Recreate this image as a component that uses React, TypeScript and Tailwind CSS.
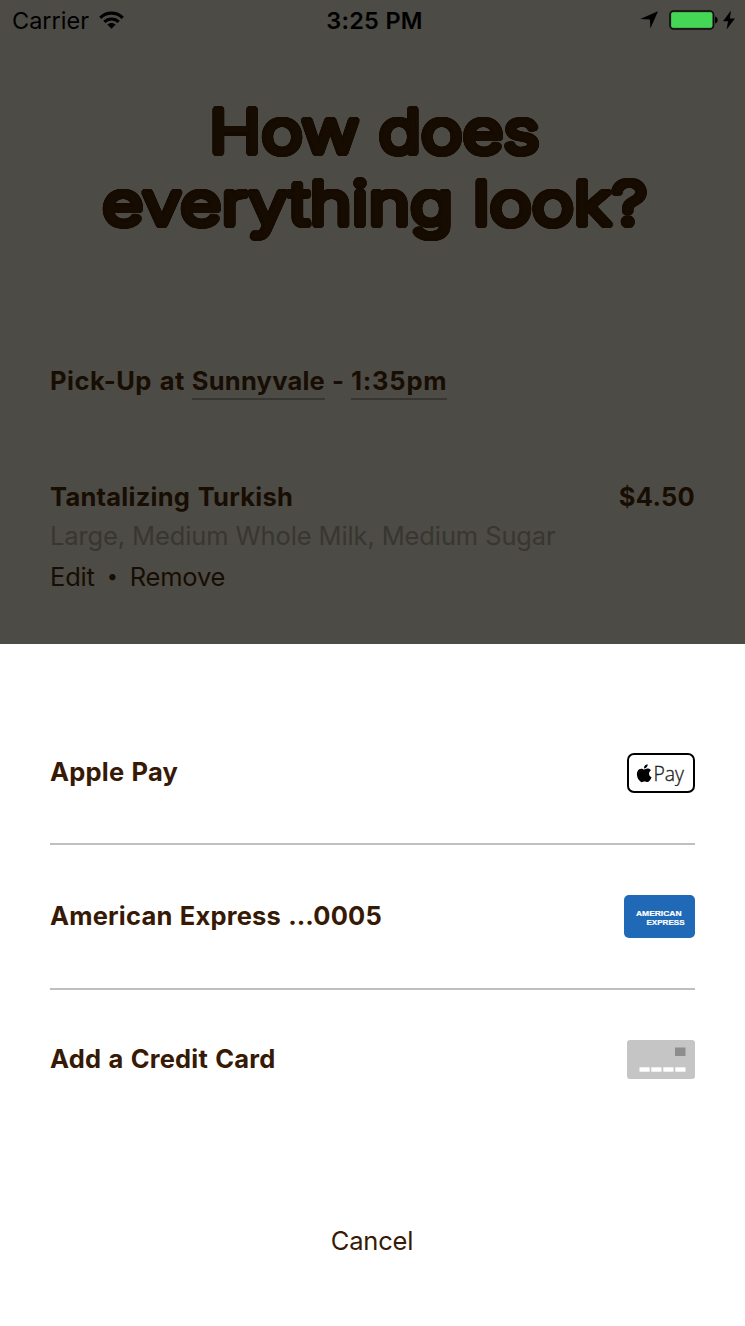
import React from 'react';

interface PaymentRowProps {
  label: string;
  icon: React.ReactNode;
}

// Thickens the headline and rounds off its stroke ends
const HEADLINE_RADIUS = 3.3;
const headlineShadow = [HEADLINE_RADIUS, HEADLINE_RADIUS / 2]
  .flatMap(radius =>
    Array.from({ length: 32 }, (_, i) => {
      const angle = (i / 32) * Math.PI * 2;
      const x = (Math.cos(angle) * radius * 0.88).toFixed(2);
      const y = (Math.sin(angle) * radius).toFixed(2);
      return `${x}px ${y}px 0 #170c02`;
    })
  )
  .join(', ');

function StatusBar() {
  return (
    <div className="grid h-10 grid-cols-3 items-center pl-3 pr-[10px] text-black">
      <div className="flex items-center gap-[10px]">
        <span className="pt-0.5 text-[23.5px] leading-[38px]">Carrier</span>
        <svg width="25" height="18" viewBox="0 0 25 18">
          <path d="M1.3 6.8C7.4.6 17.6.6 23.7 6.8" fill="none" stroke="#000" strokeWidth="3.2" />
          <path d="M5.3 10.9c4-4 10.4-4 14.4 0" fill="none" stroke="#000" strokeWidth="3" />
          <path d="M12.5 17.8l-4.2-4.2c2.3-2.1 6.1-2.1 8.4 0z" />
        </svg>
      </div>
      <span className="pl-0.5 pt-0.5 text-center text-[23.5px] font-semibold leading-[38px] tracking-[0.3px]">3:25 PM</span>
      <div className="flex items-center justify-end">
        <svg width="18" height="18" viewBox="0 0 18 18">
          <path d="M18 .2L10.4 17.6 9.9 8.6.2 8.1z" />
        </svg>
        <svg className="ml-[11px]" width="50" height="20" viewBox="0 0 50 20">
          <rect x="1" y="1" width="43.5" height="18" rx="3.5" fill="none" stroke="#0d0d0c" strokeWidth="1.6" />
          <rect x="2.2" y="2.2" width="41.1" height="15.6" rx="2" fill="#44d655" />
          <path d="M46 6.5c3.6.8 3.6 6.2 0 7z" />
        </svg>
        <svg className="ml-[4px]" width="12" height="20" viewBox="0 0 12 20">
          <path d="M8 .5L0 11.2h5L3.6 19.5 12 8.5H6.9z" />
        </svg>
      </div>
    </div>
  );
}

function ApplePayIcon() {
  return (
    <svg width="68" height="40" viewBox="0 0 68 40">
      <rect x="1" y="1" width="66" height="38" rx="6" fill="#fff" stroke="#000" strokeWidth="2" />
      <g transform="translate(7.8 10) scale(.76)">
        <path d="M18.7 14.2c0-3 2.4-4.4 2.5-4.5-1.4-2-3.5-2.3-4.3-2.3-1.8-.2-3.5 1.1-4.5 1.1-.9 0-2.3-1.1-3.8-1-2 0-3.8 1.1-4.8 2.9-2.1 3.6-.5 8.9 1.5 11.8 1 1.4 2.2 3 3.7 3 1.5-.1 2.1-1 3.9-1s2.3 1 3.9.9c1.6 0 2.6-1.4 3.6-2.9 1.1-1.7 1.6-3.3 1.6-3.4 0 0-3.3-1.2-3.3-4.6zM15.7 5.4c.8-1 1.4-2.4 1.2-3.8-1.2.1-2.6.8-3.5 1.8-.8.9-1.4 2.3-1.2 3.7 1.3.1 2.7-.7 3.5-1.7z" />
      </g>
      <text x="26.5" y="27.7" fontSize="21" textLength="30.5" lengthAdjust="spacingAndGlyphs" fill="#222" stroke="#222" strokeWidth="0.35" className="font-['Open_Sans'] font-light">Pay</text>
    </svg>
  );
}

function AmexIcon() {
  return (
    <svg width="71" height="43" viewBox="0 0 71 43">
      <rect width="71" height="43" rx="5" fill="#1f69b7" />
      <g fill="#fff" stroke="#fff" strokeWidth="0.2" className="font-['Liberation_Sans'] font-bold" fontSize="8">
        <text x="12" y="21.3" textLength="45.5" lengthAdjust="spacingAndGlyphs">AMERICAN</text>
        <text x="22.5" y="29.5" textLength="38" lengthAdjust="spacingAndGlyphs">EXPRESS</text>
      </g>
    </svg>
  );
}

function BlankCardIcon() {
  return (
    <svg width="68" height="39" viewBox="0 0 68 39">
      <rect width="68" height="39" rx="3" fill="#c5c5c5" />
      <rect x="48" y="7.5" width="10.5" height="8.5" fill="#8d8d8d" />
      {[12.5, 24.3, 36.3, 48.3].map(x => (
        <rect key={x} x={x} y="27.3" width="10.2" height="4.4" fill="#fff" />
      ))}
    </svg>
  );
}

function PaymentRow({ label, icon }: PaymentRowProps) {
  return (
    <button className="flex h-[145px] w-full items-center justify-between border-b-2 border-[#bfbfbf] text-left first:pt-0.5 last:h-[138px] last:border-b-0">
      <span className="text-[25.5px] font-bold tracking-[0.2px] [word-spacing:1px]">{label}</span>
      {icon}
    </button>
  );
}

export default function App() {
  return (
    <div className="flex h-[1326px] w-[745px] flex-col overflow-hidden bg-white font-['Inter',sans-serif] text-[#361a06]">
      <div className="h-[644px] bg-[#4d4b46] text-[#170d03]">
        <StatusBar />
        <h1
          className="mt-[55px] flex flex-col items-center pl-1 text-[61px] font-light leading-[72px] text-[#170c02]"
          style={{ textShadow: headlineShadow }}
        >
          <span className="scale-x-[1.152] whitespace-nowrap">How does</span>
          <span className="scale-x-[1.166] whitespace-nowrap">everything look?</span>
        </h1>

        <div className="px-[50px] text-[25.5px]">
          <p className="mt-[123px] flex h-[38px] gap-[7px] font-bold leading-[38px]">
            <span className="tracking-[0.5px] [word-spacing:1.2px]">Pick-Up at</span>
            <span className="border-b-2 border-[#383630] tracking-[0.22px]">Sunnyvale</span>
            <span>-</span>
            <span className="border-b-2 border-[#383630] tracking-[0.8px]">1:35pm</span>
          </p>

          <div className="mt-[77px] leading-10">
            <div className="flex justify-between font-bold tracking-[0.25px] [word-spacing:1.2px]">
              <span>Tantalizing Turkish</span>
              <span>$4.50</span>
            </div>
            <p className="-mt-px tracking-[-0.12px] text-[#383630]">Large, Medium Whole Milk, Medium Sugar</p>
            <div className="mt-px flex tracking-[-0.2px]">
              <span>Edit</span>
              <span className="-mt-px w-[35px] text-center text-[20px]">•</span>
              <span>Remove</span>
            </div>
          </div>
        </div>
      </div>

      <div className="flex flex-1 flex-col px-[50px] pt-[56px]">
        <div>
          <PaymentRow label="Apple Pay" icon={<ApplePayIcon />} />
          <PaymentRow label="American Express …0005" icon={<AmexIcon />} />
          <PaymentRow label="Add a Credit Card" icon={<BlankCardIcon />} />
        </div>
        <button className="mt-[93px] self-center pr-px text-[25.5px] leading-10 tracking-[-0.2px]">Cancel</button>
      </div>
    </div>
  );
}
